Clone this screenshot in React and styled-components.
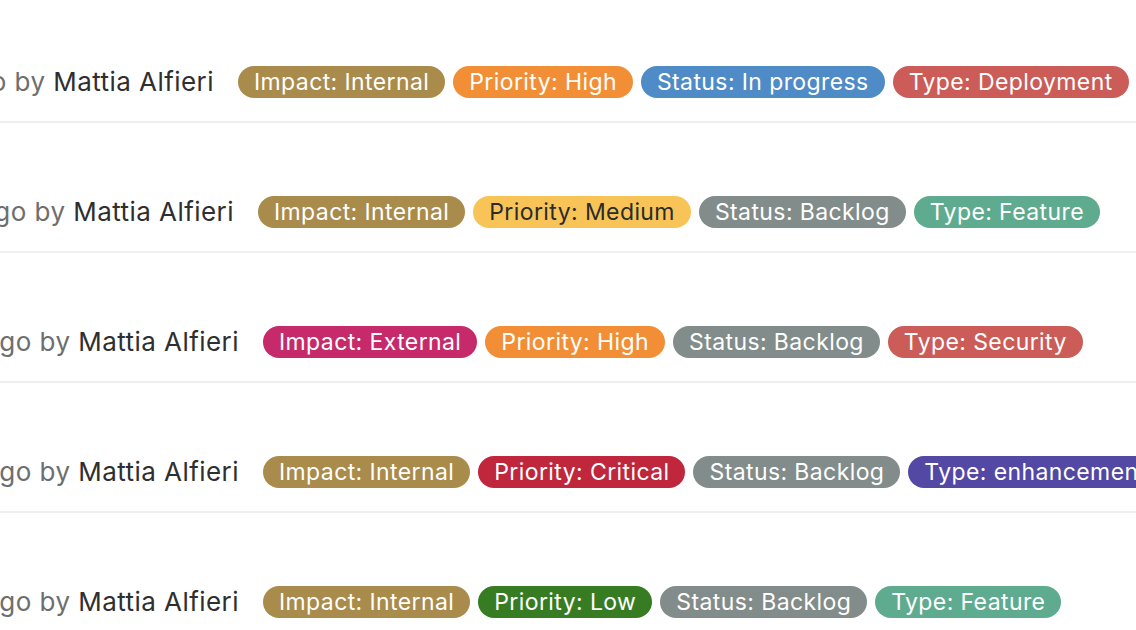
import React from 'react';
import styled, { createGlobalStyle } from 'styled-components';

const GlobalStyle = createGlobalStyle`
  html, body {
    margin: 0;
    padding: 0;
    background: #ffffff;
    overflow: hidden;
  }
  body {
    font-family: Inter, "Noto Sans", sans-serif;
    -webkit-font-smoothing: antialiased;
  }
`;

const List = styled.ul`
  list-style: none;
  margin: 0;
  padding: 0;
  width: 1136px;
  overflow: hidden;
`;

const Row = styled.li`
  display: flex;
  align-items: center;
  gap: 24px;
  padding: 73px 0 23px;
  border-bottom: 2px solid #efefef;
  white-space: nowrap;

  &:first-child {
    padding-top: 66px;
  }
`;

const Meta = styled.div`
  flex: 0 0 ${(p) => p.$width}px;
  display: flex;
  justify-content: flex-end;
  overflow: hidden;
  font-size: 26px;
  letter-spacing: 0.45px;
  line-height: 32px;
  color: #6e6e6e;
`;

const Author = styled.span`
  color: #2f2f2f;
`;

const Labels = styled.div`
  display: flex;
  gap: 8px;
  flex-wrap: nowrap;
`;

const Label = styled.span`
  display: inline-flex;
  align-items: center;
  height: 32px;
  padding: 0 16px;
  border-radius: 16px;
  font-size: 23px;
  letter-spacing: 0.4px;
  background: ${(p) => p.$bg};
  color: ${(p) => (p.$dark ? '#2b2b2b' : '#ffffff')};
  flex-shrink: 0;
`;

const colors = {
  'Impact: Internal': '#a98b4c',
  'Impact: External': '#c62a6b',
  'Priority: High': '#f28f36',
  'Priority: Medium': '#f8c457',
  'Priority: Critical': '#c0263c',
  'Priority: Low': '#377c22',
  'Status: In progress': '#4f8bc7',
  'Status: Backlog': '#828c8a',
  'Type: Deployment': '#cb5c57',
  'Type: Security': '#cb5c57',
  'Type: Feature': '#5fab8f',
  'Type: enhancement': '#5348a4',
};

const issues = [
  { ago: 'opened 2 hours ago', width: 214, labels: ['Impact: Internal', 'Priority: High', 'Status: In progress', 'Type: Deployment'] },
  { ago: 'opened 3 days ago', width: 234, labels: ['Impact: Internal', 'Priority: Medium', 'Status: Backlog', 'Type: Feature'] },
  { ago: 'opened 5 days ago', width: 239, labels: ['Impact: External', 'Priority: High', 'Status: Backlog', 'Type: Security'] },
  { ago: 'opened 6 days ago', width: 239, labels: ['Impact: Internal', 'Priority: Critical', 'Status: Backlog', 'Type: enhancement'] },
  { ago: 'opened 9 days ago', width: 239, labels: ['Impact: Internal', 'Priority: Low', 'Status: Backlog', 'Type: Feature'] },
];

const App = () => {
  return (
    <>
      <GlobalStyle />
      <List>
        {issues.map((issue, i) => (
          <Row key={i}>
            <Meta $width={issue.width}>
              <span>
                {issue.ago} by <Author>Mattia Alfieri</Author>
              </span>
            </Meta>
            <Labels>
              {issue.labels.map((l) => (
                <Label key={l} $bg={colors[l]} $dark={l === 'Priority: Medium'}>
                  {l}
                </Label>
              ))}
            </Labels>
          </Row>
        ))}
      </List>
    </>
  );
};

export default App;
